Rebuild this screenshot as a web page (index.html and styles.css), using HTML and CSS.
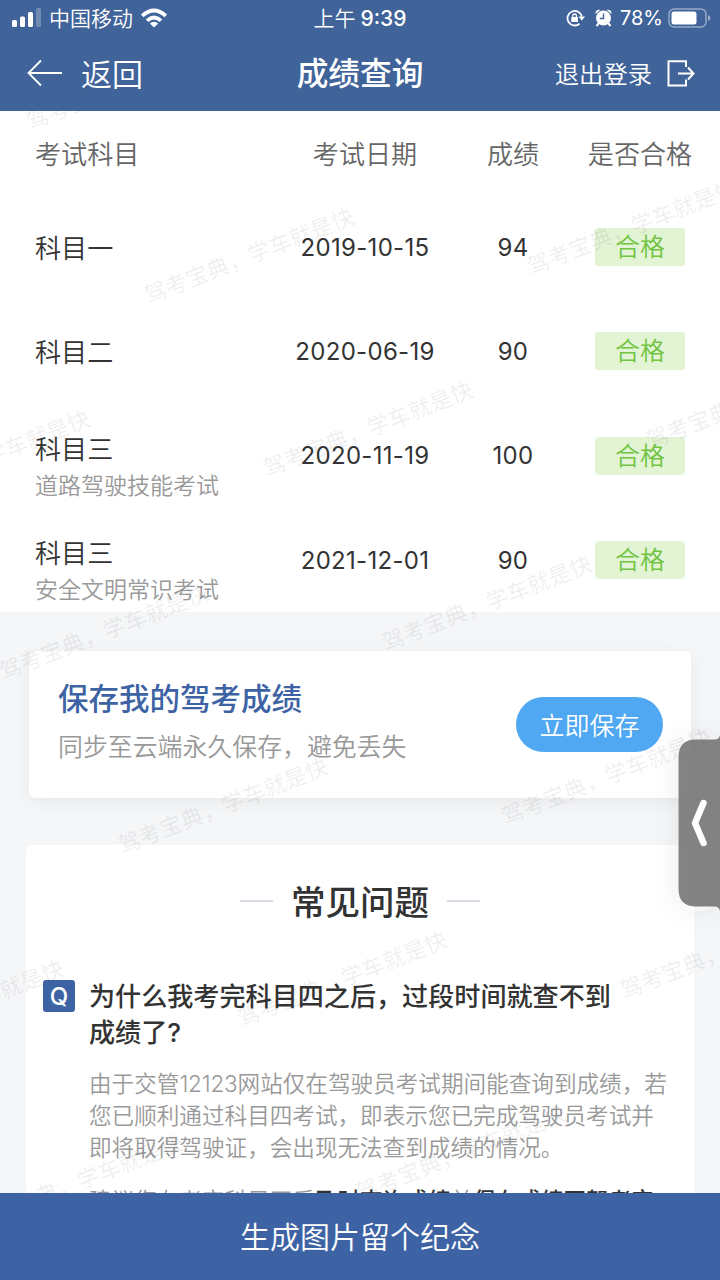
FILE: index.html
```html
<!DOCTYPE html>
<html lang="zh-CN">

<head>
    <meta charset="UTF-8">
    <meta name="viewport" content="width=device-width, initial-scale=1.0">
    <title>成绩查询</title>
    <link rel="stylesheet" href="styles.css">
</head>

<body>

    <header class="header">
        <div class="status-bar">
            <div class="status-left">
                <svg class="signal" width="30" height="20" viewBox="0 0 30 20" fill="#fff">
                    <rect x="0" y="12" width="5" height="7" rx="1.5" />
                    <rect x="8" y="8.5" width="5" height="10.5" rx="1.5" />
                    <rect x="16" y="4" width="5" height="15" rx="1.5" />
                    <rect x="24" y="0" width="5" height="19" rx="1.5" opacity="0.25" />
                </svg>
                <span class="carrier">中国移动</span>
                <svg class="wifi" width="28" height="20" viewBox="0 0 28 20" fill="none" stroke="#fff" stroke-width="3.8">
                    <path d="M2.200 7.800 Q14 -3 25.800 7.800" />
                    <path d="M7 12.600 Q14 6.400 21 12.600" />
                    <path d="M14 19.500 L9.800 15.500 Q14 12.200 18.200 15.500 Z" fill="#fff" stroke="none" />
                </svg>
            </div>
            <div class="status-time">上午 <b>9:39</b></div>
            <div class="status-right">
                <svg width="20" height="18" viewBox="0 0 20 18" fill="none" stroke="#fff" stroke-width="1.8">
                    <path d="M13.500 14.800 A7.300 7.300 0 1 1 15.900 7.500" />
                    <path d="M12.500 7.500 H19 L15.800 11.500 Z" fill="#fff" stroke="none" />
                    <rect x="5.300" y="8" width="6.600" height="5" fill="#fff" stroke="none" />
                    <path d="M6.800 8.500 V6.800 A1.800 1.800 0 0 1 10.400 6.800 V8.500" stroke-width="1.3" />
                </svg>
                <svg class="alarm" width="17" height="18" viewBox="0 0 17 18" fill="#fff">
                    <circle cx="8.500" cy="9" r="7.5" />
                    <path d="M0.500 5 Q0 0.500 5.500 0.800 Z M16.500 5 Q17 0.500 11.500 0.800 Z" />
                    <path d="M4 14 L1.500 17 M13 14 L15.500 17" stroke="#fff" stroke-width="2" />
                    <path d="M8.500 4.500 V9.500 H4.800" fill="none" stroke="#40639a" stroke-width="1.4" />
                </svg>
                <span class="percent">78%</span>
                <svg width="43" height="20" viewBox="0 0 43 20">
                    <rect x="1" y="1" width="37" height="18" rx="5" fill="none" stroke="#fff" stroke-opacity="0.45" stroke-width="1.5" />
                    <rect x="3.500" y="3.500" width="25" height="13" rx="2.5" fill="#fff" />
                    <path d="M40 7 Q42.500 8 42.500 10 T40 13 Z" fill="#fff" opacity="0.45" />
                </svg>
            </div>
        </div>

        <nav class="nav-bar">
            <a class="back">
                <svg width="36" height="28" viewBox="0 0 36 28" fill="none" stroke="#fff" stroke-width="1.8">
                    <path d="M14 1.500 L1.500 14 L14 26.500 M1.500 14 H35" />
                </svg>
                <span>返回</span>
            </a>
            <h1 class="nav-title">成绩查询</h1>
            <a class="logout">
                <span>退出登录</span>
                <svg width="28" height="27" viewBox="0 0 28 27" fill="none" stroke="#fff" stroke-width="2">
                    <path d="M19 7 V1.200 H1.500 V25.500 H19 V19.500" />
                    <path d="M11 13.500 H26 M21 7.500 L26.500 13.500 L21 19.500" />
                </svg>
            </a>
        </nav>
    </header>

    <main class="content">
        <!-- 成绩列表 -->
        <section class="score-table">
            <div class="score-row score-head">
                <span class="subject">考试科目</span>
                <span>考试日期</span>
                <span>成绩</span>
                <span>是否合格</span>
            </div>
            <div class="score-row">
                <div class="subject">科目一</div>
                <span class="num">2019-10-15</span>
                <span class="num">94</span>
                <span class="badge">合格</span>
            </div>
            <div class="score-row">
                <div class="subject">科目二</div>
                <span class="num">2020-06-19</span>
                <span class="num">90</span>
                <span class="badge">合格</span>
            </div>
            <div class="score-row">
                <div class="subject two-lines">科目三<small>道路驾驶技能考试</small></div>
                <span class="num">2020-11-19</span>
                <span class="num">100</span>
                <span class="badge">合格</span>
            </div>
            <div class="score-row">
                <div class="subject two-lines">科目三<small>安全文明常识考试</small></div>
                <span class="num">2021-12-01</span>
                <span class="num">90</span>
                <span class="badge">合格</span>
            </div>
        </section>

        <!-- 保存成绩 -->
        <section class="save-card">
            <div>
                <h2>保存我的驾考成绩</h2>
                <p>同步至云端永久保存，避免丢失</p>
            </div>
            <button class="save-btn">立即保存</button>
        </section>

        <!-- 常见问题 -->
        <section class="faq">
            <h2 class="faq-title">常见问题</h2>
            <div class="faq-item">
                <span class="q-icon">Q</span>
                <div class="faq-text">
                    <h3>为什么我考完科目四之后，过段时间就查不到<br>成绩了?</h3>
                    <p>由于交管<span class="site-no">12123</span>网站仅在驾驶员考试期间能查询到成绩，若<br>您已顺利通过科目四考试，即表示您已完成驾驶员考试并<br>即将取得驾驶证，会出现无法查到成绩的情况。</p>
                    <p class="tip">建议您在考完科目四后<b>及时查询成绩</b>并<b>保存成绩至驾考宝</b></p>
                </div>
            </div>
        </section>
    </main>

    <!-- 水印 -->
    <svg class="watermark" width="720" height="1280" viewBox="0 0 720 1280">
        <text transform="translate(30 130) rotate(-21.3)">驾考宝典，学车就是快</text>
        <text transform="translate(148 304) rotate(-21.3)">驾考宝典，学车就是快</text>
        <text transform="translate(531 275) rotate(-21.3)">驾考宝典，学车就是快</text>
        <text transform="translate(-116 506) rotate(-21.3)">驾考宝典，学车就是快</text>
        <text transform="translate(267 477) rotate(-21.3)">驾考宝典，学车就是快</text>
        <text transform="translate(650 449) rotate(-21.3)">驾考宝典，学车就是快</text>
        <text transform="translate(3 680) rotate(-21.3)">驾考宝典，学车就是快</text>
        <text transform="translate(386 651) rotate(-21.3)">驾考宝典，学车就是快</text>
        <text transform="translate(122 854) rotate(-21.3)">驾考宝典，学车就是快</text>
        <text transform="translate(505 825) rotate(-21.3)">驾考宝典，学车就是快</text>
        <text transform="translate(-142 1056) rotate(-21.3)">驾考宝典，学车就是快</text>
        <text transform="translate(241 1027) rotate(-21.3)">驾考宝典，学车就是快</text>
        <text transform="translate(624 999) rotate(-21.3)">驾考宝典，学车就是快</text>
        <text transform="translate(-23 1230) rotate(-21.3)">驾考宝典，学车就是快</text>
        <text transform="translate(360 1201) rotate(-21.3)">驾考宝典，学车就是快</text>
    </svg>

    <div class="side-handle">
        <svg width="42" height="176" viewBox="0 0 42 176">
            <path d="M42 0 Q41 4.500 37 4.500 H18 Q0.500 4.500 0.500 22 V154 Q0.500 171.500 18 171.500 H37 Q41 171.500 42 176 Z" fill="#727272" fill-opacity="0.88" />
            <path d="M25.500 68 L17 88 L25.500 108" fill="none" stroke="#fff" stroke-width="6.5" stroke-linecap="round" stroke-linejoin="round" />
        </svg>
    </div>

    <footer class="bottom-bar">生成图片留个纪念</footer>

</body>

</html>
```
FILE: styles.css
```css
* {
    box-sizing: border-box;
    margin: 0;
    padding: 0;
}

body {
    display: flex;
    flex-direction: column;
    position: relative;
    width: 720px;
    height: 1280px;
    overflow: hidden;
    font-family: Inter, "Noto Sans CJK SC", sans-serif;
    font-weight: 350;
    color: #333;
    background-color: #f5f6f8;
}

/* 顶部 */
.header {
    position: relative;
    z-index: 2;
    flex: none;
    height: 111px;
    color: #fff;
    background-color: #40639a;
}

.status-bar {
    display: grid;
    grid-template-columns: 1fr auto 1fr;
    align-items: center;
    height: 35px;
    padding: 0 9px 0 12px;
    font-size: 21px;
}

.status-left,
.status-right {
    display: flex;
    align-items: center;
}

.status-right {
    justify-content: flex-end;
}

.carrier {
    margin: 0 7px;
    padding-bottom: 2px;
}

.status-time {
    padding: 0 3px 2px 0;
}

.status-time b {
    margin-left: -1px;
    font-weight: 500;
}

.alarm {
    margin-left: 9px;
}

.percent {
    margin: 0 5px 0 8px;
    font-size: 20px;
    font-weight: 400;
}

.nav-bar {
    display: grid;
    grid-template-columns: 1fr auto 1fr;
    align-items: center;
    height: 76px;
    padding: 0 25px 0 27px;
}

.back,
.logout {
    display: flex;
    align-items: center;
}

.back {
    gap: 18px;
    font-size: 31px;
}

.back span,
.logout span {
    padding-bottom: 2px;
}

.logout {
    justify-content: flex-end;
    gap: 15px;
    font-size: 24.3px;
}

.nav-title {
    padding: 0 2px 4px 0;
    font-size: 31.7px;
    font-weight: 500;
}

.content {
    flex: 1;
    min-height: 0;
    overflow: hidden;
}

/* 成绩列表 */
.score-table {
    background-color: #fff;
}

.score-row {
    display: grid;
    grid-template-columns: 240px 180px 116px 138px;
    align-items: center;
    justify-items: center;
    height: 104.33px;
    padding-left: 35px;
    font-size: 26.1px;
}

.score-head {
    height: 84px;
    line-height: 38px;
    color: #666;
}

.subject {
    justify-self: start;
    padding-top: 3px;
    line-height: 38px;
}

.score-head span {
    padding-top: 3px;
}

.two-lines {
    padding-top: 23px;
}

.subject small {
    display: block;
    font-size: 23px;
    line-height: 35px;
    color: #999;
}

.num {
    font-size: 24px;
    font-weight: 400;
    letter-spacing: 0.3px;
}

.badge {
    width: 90px;
    height: 38px;
    line-height: 39px;
    text-align: center;
    font-size: 25px;
    color: #71c443;
    background-color: #e2f4d4;
    border-radius: 3px;
}

/* 保存成绩 */
.save-card {
    display: flex;
    justify-content: space-between;
    align-items: center;
    height: 147px;
    margin: 39px 29px 47px;
    padding: 0 28px 3px 29px;
    background-color: #fff;
    border-radius: 6px;
    box-shadow: 0 4px 16px rgba(0, 0, 0, 0.06);
}

.save-card h2 {
    font-size: 30.5px;
    font-weight: 500;
    line-height: 48px;
    color: #3d63a4;
}

.save-card p {
    font-size: 24.9px;
    line-height: 48px;
    color: #999;
}

.save-btn {
    width: 147px;
    height: 55px;
    margin-top: 3px;
    padding-bottom: 2px;
    font-family: inherit;
    font-size: 25px;
    font-weight: inherit;
    color: #fff;
    background-color: #50a8f2;
    border: none;
    border-radius: 28px;
}

/* 常见问题 */
.faq {
    height: 500px;
    margin: 0 26px;
    padding: 31px 17px 0;
    background-color: #fff;
    border-radius: 6px;
}

.faq-title {
    display: flex;
    justify-content: center;
    align-items: center;
    gap: 18px;
    padding-top: 2px;
    font-size: 34.5px;
    font-weight: 500;
    line-height: 50px;
}

.faq-title::before,
.faq-title::after {
    content: "";
    width: 33px;
    height: 2px;
    margin-bottom: 4px;
    background-color: #d8d8e0;
}

.faq-item {
    display: flex;
    gap: 14px;
    margin-top: 51px;
}

.q-icon {
    flex: none;
    width: 32px;
    height: 32px;
    margin-top: 1px;
    line-height: 33px;
    text-align: center;
    font-size: 24px;
    font-weight: 500;
    color: #fff;
    background-color: #3d63a4;
    border-radius: 3px;
}

.faq-text {
    white-space: nowrap;
}

.faq-text h3 {
    font-size: 26.1px;
    font-weight: 500;
    line-height: 36px;
}

.faq-text p {
    margin-top: 17px;
    font-size: 22.6px;
    line-height: 32px;
    color: #999;
}

.faq-text .tip {
    margin-top: 21px;
}

.site-no {
    letter-spacing: -0.2px;
}

.faq-text b {
    font-weight: 500;
    color: #333;
}

.watermark {
    position: absolute;
    top: 0;
    left: 0;
    z-index: 1;
    pointer-events: none;
    font-size: 22.3px;
    font-weight: 500;
    fill: rgba(0, 0, 0, 0.06);
}

.side-handle {
    position: absolute;
    top: 735px;
    right: 0;
    z-index: 3;
    height: 176px;
    border-radius: 20px;
    box-shadow: 0 0 30px rgba(0, 0, 0, 0.08);
}

.bottom-bar {
    position: relative;
    z-index: 2;
    flex: none;
    height: 87px;
    line-height: 88px;
    text-align: center;
    font-size: 30px;
    color: #fff;
    background-color: #3d63a4;
}
```
